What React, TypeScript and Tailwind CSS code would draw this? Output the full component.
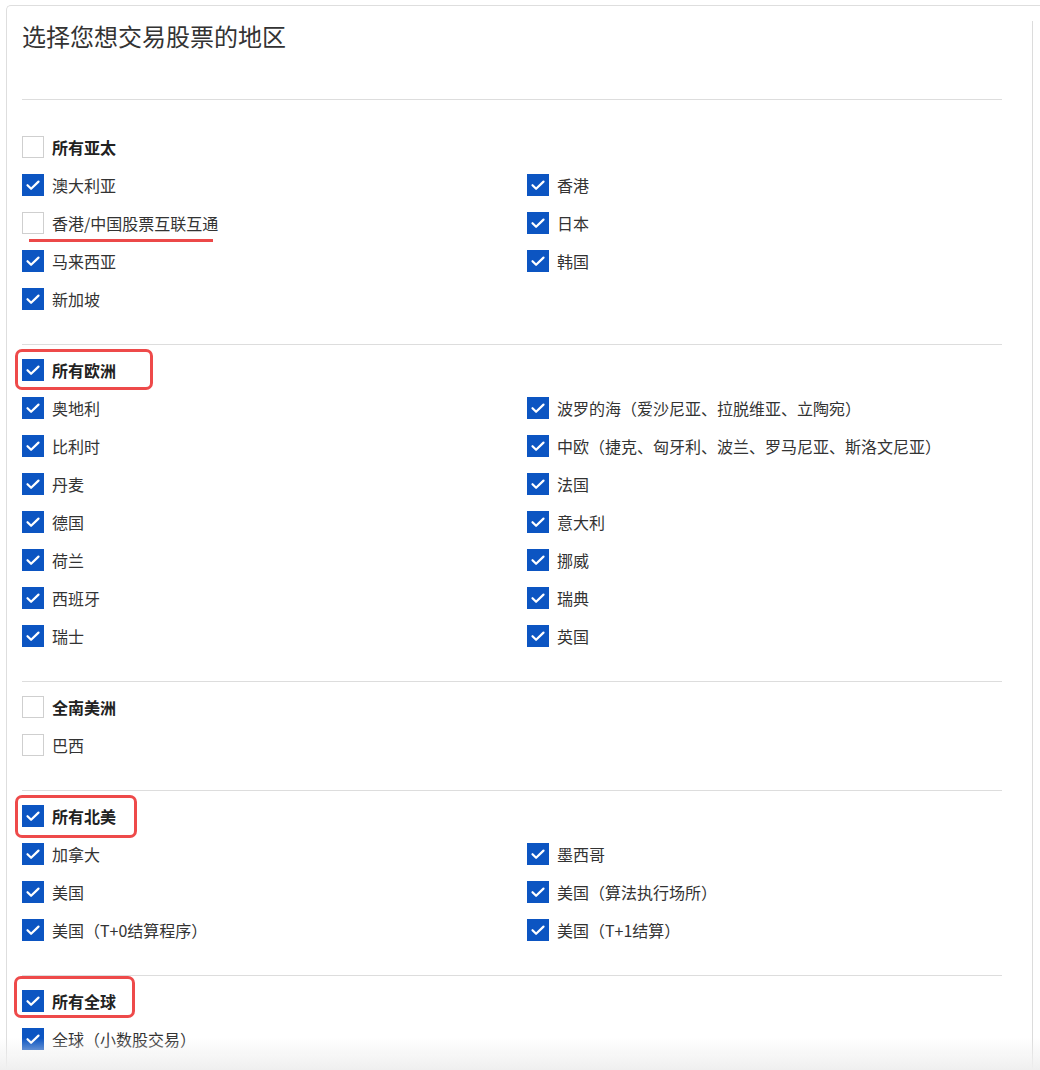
import React from "react";

type Item = { label: string; checked: boolean; underline?: boolean };

const font = { fontFamily: '"Noto Sans CJK SC", "Noto Sans", sans-serif' };

function Box({ checked }: { checked: boolean }) {
  if (checked) {
    return (
      <span className="flex h-[22px] w-[22px] shrink-0 items-center justify-center bg-[#0c55c2]">
        <svg width="22" height="22" viewBox="0 0 22 22" fill="none">
          <path d="M5.5 11.2l3.6 3.6L16.5 7.6" stroke="white" strokeWidth="2.2" strokeLinecap="round" strokeLinejoin="round" />
        </svg>
      </span>
    );
  }
  return <span className="block h-[22px] w-[22px] shrink-0 border border-[#cfcfcf] bg-white" />;
}

function Row({ item, bold }: { item: Item; bold?: boolean }) {
  return (
    <div className="relative flex h-[22px] items-center gap-2">
      <Box checked={item.checked} />
      <span className={bold ? "text-[16px] font-bold text-[#222]" : "text-[16px] text-[#333]"}>{item.label}</span>
      {item.underline && (
        <span className="absolute left-[7px] top-[27px] h-[3px] w-[184px] bg-[#ec4848]" />
      )}
    </div>
  );
}

type Section = {
  header: Item;
  items: Item[];
  first?: boolean;
  box?: string;
};

const sections: Section[] = [
  {
    first: true,
    header: { label: "所有亚太", checked: false },
    items: [
      { label: "澳大利亚", checked: true },
      { label: "香港", checked: true },
      { label: "香港/中国股票互联互通", checked: false, underline: true },
      { label: "日本", checked: true },
      { label: "马来西亚", checked: true },
      { label: "韩国", checked: true },
      { label: "新加坡", checked: true },
    ],
  },
  {
    header: { label: "所有欧洲", checked: true },
    box: "eu",
    items: [
      { label: "奥地利", checked: true },
      { label: "波罗的海（爱沙尼亚、拉脱维亚、立陶宛）", checked: true },
      { label: "比利时", checked: true },
      { label: "中欧（捷克、匈牙利、波兰、罗马尼亚、斯洛文尼亚）", checked: true },
      { label: "丹麦", checked: true },
      { label: "法国", checked: true },
      { label: "德国", checked: true },
      { label: "意大利", checked: true },
      { label: "荷兰", checked: true },
      { label: "挪威", checked: true },
      { label: "西班牙", checked: true },
      { label: "瑞典", checked: true },
      { label: "瑞士", checked: true },
      { label: "英国", checked: true },
    ],
  },
  {
    header: { label: "全南美洲", checked: false },
    items: [{ label: "巴西", checked: false }],
  },
  {
    header: { label: "所有北美", checked: true },
    box: "na",
    items: [
      { label: "加拿大", checked: true },
      { label: "墨西哥", checked: true },
      { label: "美国", checked: true },
      { label: "美国（算法执行场所）", checked: true },
      { label: "美国（T+0结算程序）", checked: true },
      { label: "美国（T+1结算）", checked: true },
    ],
  },
  {
    header: { label: "所有全球", checked: true },
    box: "gl",
    items: [{ label: "全球（小数股交易）", checked: true }],
  },
];

function RedBox({ kind }: { kind: string }) {
  if (kind === "eu")
    return <span className="pointer-events-none absolute left-[-7px] top-[-10px] h-[41px] w-[138px] rounded-[7px] border-[3px] border-[#ee4a4a]" />;
  if (kind === "na")
    return <span className="pointer-events-none absolute left-[-7px] top-[-10px] h-[43px] w-[122px] rounded-[7px] border-[3px] border-[#ee4a4a]" />;
  return <span className="pointer-events-none absolute left-[-8px] top-[-14px] h-[42px] w-[121px] rounded-[7px] border-[3px] border-[#ee4a4a]" />;
}

export default function App() {
  return (
    <div className="min-h-screen bg-white pl-[6px] pt-[5px]" style={font}>
      <div className="flex rounded-tl-[5px] border-l border-t border-[#dedede]">
        <div className="flex-1 pl-[15px] pr-[30px]">
          <h1 className="pt-[14px] text-[24px] font-normal leading-8 text-[#333]">选择您想交易股票的地区</h1>
          <div className="mt-[47px]">
            {sections.map((s, i) => (
              <div
                key={i}
                className={
                  s.first
                    ? "border-t border-[#dddddd] pb-[34px] pt-[36px]"
                    : "border-t border-[#dddddd] pb-[34px] pt-[14px]"
                }
              >
                <div className="grid grid-cols-2 gap-x-[30px] gap-y-4">
                  <div className="relative col-span-2">
                    {s.box && <RedBox kind={s.box} />}
                    <Row item={s.header} bold />
                  </div>
                  {s.items.map((it, j) => (
                    <Row key={j} item={it} />
                  ))}
                </div>
              </div>
            ))}
          </div>
        </div>
        <div className="mr-[7px] mt-[15px] w-px self-stretch bg-[#dcdcdc]" />
      </div>
      <div className="pointer-events-none fixed bottom-0 left-0 right-0 h-[32px] bg-linear-to-b from-white/0 to-[#efefef]" />
    </div>
  );
}
